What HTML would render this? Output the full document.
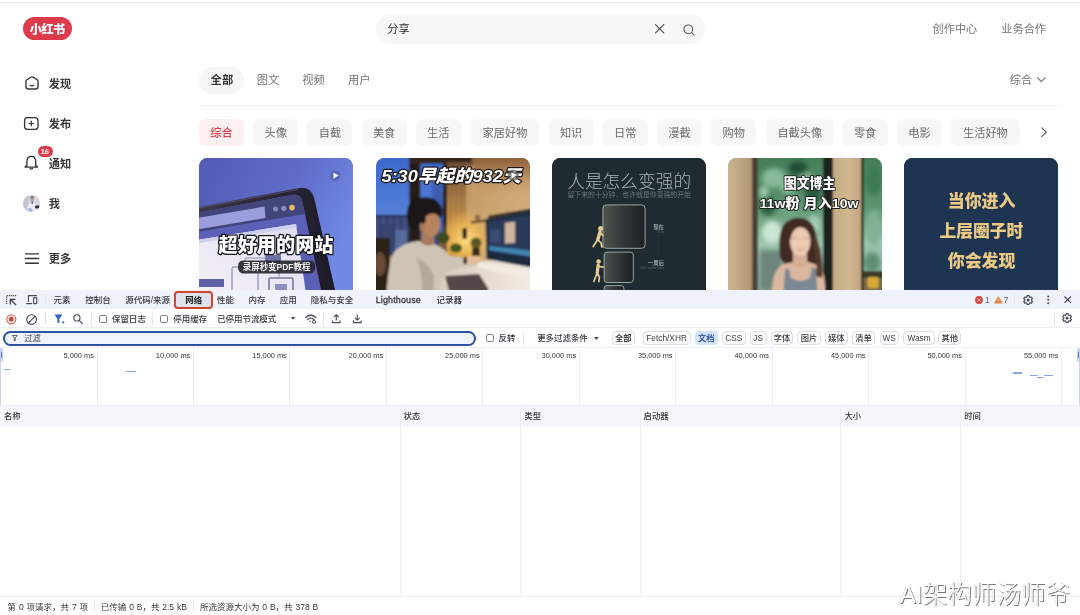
<!DOCTYPE html>
<html lang="zh-CN">
<head>
<meta charset="utf-8">
<title>小红书 - 分享</title>
<style>
*{margin:0;padding:0;box-sizing:border-box}
html,body{width:1080px;height:615px;overflow:hidden;background:#fff}
body{opacity:0.9999;position:relative;font-family:"Liberation Sans","Noto Sans CJK SC",sans-serif;color:#333;-webkit-font-smoothing:antialiased}
.a{position:absolute}
.t{position:absolute;white-space:nowrap;line-height:1}
svg{position:absolute;overflow:visible}
/* ---------- page ---------- */
#topline{left:0;top:2px;width:1080px;height:1px;background:#e6e6e6}
#logo{left:23px;top:17px;width:49px;height:23px;border-radius:12px;background:#df3a4b;color:#fff;font-weight:900;font-size:12.2px;text-align:center;line-height:26px;letter-spacing:-0.5px;padding-right:0.5px}
#search{left:376px;top:14px;width:329px;height:29.5px;border-radius:15px;background:#f7f7f7}
.nav{font-size:11.2px;font-weight:700;color:#363636;left:48.7px}
.top{font-size:11.2px;color:#757575}
.tab{font-size:11.3px;color:#757575;top:75.2px}
#tabsel{left:199px;top:67px;width:45.3px;height:26.5px;border-radius:14px;background:#f6f6f6}
#divider{left:199px;top:105px;width:861px;height:1px;background:#f1f1f1}
.chip{position:absolute;top:118.8px;height:27px;width:45px;border-radius:6px;background:#f7f7f7;color:#6b6b6b;font-size:11.2px;text-align:center;line-height:28.6px;white-space:nowrap}
.chip.w{width:68.4px}
.chip.on{background:#fdf0f1;color:#e0394a;font-weight:500}
.card{position:absolute;top:157.5px;width:154px;height:140px;border-radius:8.5px;overflow:hidden}
.card svg{left:0;top:0}
/* ---------- devtools ---------- */
#dt{left:0;top:289.5px;width:1080px;height:325.5px;background:#fff;font-size:8.3px;color:#3c4043}

#dt .t{color:#33363b}
#dtbar{left:0;top:0;width:1080px;height:20px;background:#eff2fa;border-bottom:1px solid #e1e6f1}
.dtab{font-size:8.5px;top:6.2px;font-weight:500}
.vs{position:absolute;width:1px;background:#e2e6ee}
#redbox{left:174px;top:1px;width:38.8px;height:18.6px;border:2.2px solid #cf4535;border-radius:4px;background:#dde2ec}
#tool{left:0;top:19.8px;width:1080px;height:18.8px;background:#fff;border-bottom:1px solid #eceff5}
.tl{font-size:8.45px;top:25.6px;font-weight:500}
.cb{position:absolute;width:8.4px;height:8.4px;border:1.1px solid #7a8088;border-radius:1.8px;background:#fff}
#pill{left:3.3px;top:41.5px;width:473.2px;height:14.8px;border:2.2px solid #2d52a2;border-radius:7.4px;background:#eef3fc}
.fb{position:absolute;top:41.6px;height:14.2px;border:1px solid #d9dde4;border-radius:4px;font-size:8.3px;text-align:center;line-height:13.2px;color:#3c4043;white-space:nowrap;background:#fff;font-weight:500}
.fb.on{background:#d3e3fd;border-color:#d3e3fd;color:#1b3f8f}
#ov{left:0;top:57.9px;width:1080px;height:58px;background:#fff;border-top:1px solid #eceff5}
.gl{position:absolute;top:58px;width:1px;height:58px;background:#e9edf5}
.ms{font-size:7.4px;top:62.3px;text-align:right;width:60px;color:#3c4043}
.dash{position:absolute;height:1.3px;background:#8fa4e3}
#th{left:0;top:115.7px;width:1080px;height:20.4px;background:#f5f7fc;border-top:1px solid #eaedf5;border-bottom:1px solid #eceff5}
.thc{font-size:8.3px;top:122.3px;font-weight:500}
.cl{position:absolute;top:116px;width:1px;height:191px;background:#eceef4}
#status{left:0;top:306.4px;width:1080px;height:19.1px;background:#fff;border-top:1px solid #e9eff1}
.st{font-size:8.5px;top:313.2px;word-spacing:0.5px}
</style>
</head>
<body>
<div class="a" id="topline"></div>

<!-- header -->
<div class="a" id="logo">小红书</div>
<div class="a" id="search"></div>
<div class="t" style="left:387.3px;top:24px;font-size:11.3px;color:#333">分享</div>
<svg style="left:655px;top:24.3px" width="9.4" height="9.4" viewBox="0 0 10 10"><path d="M0.6 0.6L9.4 9.4M9.4 0.6L0.6 9.4" stroke="#444" stroke-width="1.15" fill="none" stroke-linecap="round"/></svg>
<svg style="left:682.5px;top:23.8px" width="12" height="12" viewBox="0 0 12 12"><circle cx="5.3" cy="5.3" r="4.4" stroke="#555" stroke-width="1.05" fill="none"/><path d="M8.7 8.7L11 11" stroke="#555" stroke-width="1.05" stroke-linecap="round"/></svg>
<div class="t top" style="left:932.5px;top:24.2px">创作中心</div>
<div class="t top" style="left:1001.3px;top:24.2px">业务合作</div>

<!-- sidebar -->
<svg style="left:24.5px;top:75.5px" width="14" height="14" viewBox="0 0 14 14"><path d="M1 5.2Q1 4.3 1.8 3.8L6 1.2Q7 0.6 8 1.2L12.2 3.8Q13 4.3 13 5.2V10.4Q13 13 10.4 13H3.6Q1 13 1 10.4Z" fill="none" stroke="#333" stroke-width="1.35" stroke-linejoin="round"/><path d="M5.2 9.3Q7 10.5 8.8 9.3" fill="none" stroke="#333" stroke-width="1.25" stroke-linecap="round"/></svg>
<div class="t nav" style="top:79.0px">发现</div>
<svg style="left:24.3px;top:116.6px" width="14.6" height="13" viewBox="0 0 14.6 13"><rect x="0.6" y="0.6" width="13.4" height="11.8" rx="3.2" fill="none" stroke="#333" stroke-width="1.35"/><path d="M7.3 4.2V8.8M5 6.5H9.6" stroke="#333" stroke-width="1.25" stroke-linecap="round"/></svg>
<div class="t nav" style="top:118.8px">发布</div>
<svg style="left:24.3px;top:155.4px" width="14.6" height="15" viewBox="0 0 14.6 15"><path d="M2.9 10.6V6.6Q2.9 1.4 7.3 1.4Q11.7 1.4 11.7 6.6V10.6L13.4 11.6V12.2H1.2V11.6Z" fill="none" stroke="#333" stroke-width="1.35" stroke-linejoin="round"/><path d="M6 13.6Q7.3 14.6 8.6 13.6" fill="none" stroke="#333" stroke-width="1.25" stroke-linecap="round"/></svg>
<div class="a" style="left:37.6px;top:146.3px;width:15px;height:10.4px;border-radius:6px;background:#e0394a"></div>
<div class="t" style="left:40.4px;top:147.6px;font-size:7.8px;color:#fff;font-weight:700">16</div>
<div class="t nav" style="top:159.1px">通知</div>
<div class="a" id="avatar" style="left:22.8px;top:194.6px;width:17.2px;height:17.2px;border-radius:50%;overflow:hidden;background:#cfd4de">
  <svg width="17.2" height="17.2" viewBox="0 0 17.2 17.2"><defs><filter id="bav" x="-10%" y="-10%" width="120%" height="120%"><feGaussianBlur stdDeviation="0.45"/></filter></defs><g filter="url(#bav)"><rect x="-1" y="-1" width="19.2" height="19.2" fill="#d6d6e2"/><rect x="-1" y="-1" width="6.5" height="19.2" fill="#c3c4d3"/><path d="M3.4 18Q4 7.6 9.200 6.400Q14.400 7.600 15 18Z" fill="#ecebf3"/><ellipse cx="9.200" cy="3.700" rx="2" ry="2.500" fill="#b79a8e"/><path d="M7 3.200Q9.200 -0.800 11.400 3Q9.200 1.600 7 3.200Z" fill="#4a3f3e"/><path d="M8.600 6.200H9.800V9H8.600Z" fill="#4a4660"/><rect x="12.200" y="10.600" width="4.200" height="3" rx="0.600" fill="#2b3050"/><ellipse cx="7" cy="15" rx="2.600" ry="2.200" fill="#a9c0de"/></g></svg>
</div>
<div class="t nav" style="top:198.6px">我</div>
<svg style="left:24.6px;top:252.6px" width="14" height="11" viewBox="0 0 14 11"><path d="M0.6 0.8H13.4M0.6 5.5H13.4M0.6 10.2H13.4" stroke="#333" stroke-width="1.35" stroke-linecap="round"/></svg>
<div class="t nav" style="top:253.6px">更多</div>

<!-- tabs -->
<div class="a" id="tabsel"></div>
<div class="t tab" style="left:210.6px;color:#333;font-weight:700">全部</div>
<div class="t tab" style="left:256.7px">图文</div>
<div class="t tab" style="left:302.3px">视频</div>
<div class="t tab" style="left:348px">用户</div>
<div class="t top" style="left:1009.7px;top:75.3px">综合</div>
<svg style="left:1036.6px;top:77.4px" width="8.6" height="5.6" viewBox="0 0 8.6 5.6"><path d="M0.6 0.8L4.3 4.6L8 0.8" fill="none" stroke="#757575" stroke-width="1.15" stroke-linecap="round" stroke-linejoin="round"/></svg>
<div class="a" id="divider"></div>

<!-- chips -->
<div class="chip on" style="left:199px">综合</div>
<div class="chip" style="left:253.2px">头像</div>
<div class="chip" style="left:307.4px">自截</div>
<div class="chip" style="left:361.6px">美食</div>
<div class="chip" style="left:415.8px">生活</div>
<div class="chip w" style="left:470.8px">家居好物</div>
<div class="chip" style="left:548.6px">知识</div>
<div class="chip" style="left:602.8px">日常</div>
<div class="chip" style="left:657px">漫截</div>
<div class="chip" style="left:711.2px">购物</div>
<div class="chip w" style="left:765.6px">自截头像</div>
<div class="chip" style="left:842.6px">零食</div>
<div class="chip" style="left:897px">电影</div>
<div class="chip w" style="left:951.2px">生活好物</div>
<svg style="left:1041.4px;top:127px" width="6.4" height="10.4" viewBox="0 0 6.4 10.4"><path d="M0.8 0.8L5.4 5.2L0.8 9.6" fill="none" stroke="#555" stroke-width="1.1" stroke-linecap="round" stroke-linejoin="round"/></svg>

<!-- cards -->
<div class="card" id="c1" style="left:199px;background:#6a70c8">
<svg width="154" height="140" viewBox="0 0 154 140">
<defs>
<linearGradient id="g1" x1="0" y1="0" x2="1" y2="0.5"><stop offset="0" stop-color="#525bb2"/><stop offset="0.55" stop-color="#5f6cc8"/><stop offset="1" stop-color="#718ae6"/></linearGradient>
<linearGradient id="g1b" x1="0" y1="1" x2="1" y2="0"><stop offset="0" stop-color="#f6f1f6"/><stop offset="1" stop-color="#dddcf1"/></linearGradient>
<linearGradient id="g1f" x1="0" y1="0" x2="1" y2="0"><stop offset="0" stop-color="#3a3848"/><stop offset="1" stop-color="#1d1b29"/></linearGradient>
<filter id="b1" x="-10%" y="-10%" width="120%" height="120%"><feGaussianBlur stdDeviation="0.6"/></filter>
</defs>
<rect width="154" height="140" fill="url(#g1)"/>
<g filter="url(#b1)">
<path d="M-2 49.400L99 30.200Q111.500 28 115 39.500L137 136L-2 136Z" fill="url(#g1f)"/>
<path d="M-2 50.400L99 31.400" stroke="#6a6888" stroke-width="1" stroke-opacity="0.600" fill="none"/>
<path d="M-2 55L94 36.800Q101 35.600 103.200 43L123 136L-2 136Z" fill="#5a60b6"/>
<path d="M-2 55L94 36.800Q101 35.600 103.200 43L106 56L-2 74Z" fill="#42457a"/>
<path d="M-2 60L65.500 48.600L66.500 60L-2 71.500Z" fill="#9c9ddc"/>
<circle cx="76.600" cy="51" r="2.600" fill="#8886c2"/><circle cx="84.800" cy="50.300" r="2.600" fill="#8e8cc8"/><circle cx="93" cy="49.600" r="2.800" fill="#ecbb62"/>
<path d="M-2 82L97 66L107 136L-2 136Z" fill="url(#g1b)"/>
<path d="M-2 82L97 66L97.600 69.500L-2 85.500Z" fill="#cfcfee"/>
<rect x="33" y="109" width="26" height="26" rx="1.500" fill="none" stroke="#77799f" stroke-width="1"/>
<rect x="66" y="97" width="16" height="8" rx="1" fill="#6e70a8"/>
<rect x="70" y="120" width="24" height="14" rx="1" fill="none" stroke="#77799f" stroke-width="1.600"/>
<rect x="76" y="126" width="12" height="8" fill="#8c8ec4"/>
<rect x="-2" y="121" width="27" height="8" fill="#5e60a6"/>
<path d="M46 109V100H66M80 105V120" fill="none" stroke="#8587b7" stroke-width="0.900"/>
</g>
<circle cx="136.400" cy="17.600" r="5.200" fill="#3d4392" fill-opacity="0.400"/>
<path d="M134.400 14.400L139.600 17.600L134.400 20.800Z" fill="#fff"/>
<text x="77" y="94" text-anchor="middle" font-family="'Liberation Sans','Noto Sans CJK SC',sans-serif" font-weight="900" font-size="19.400" fill="#fff" stroke="#14131c" stroke-width="2.600" stroke-linejoin="round" paint-order="stroke" textLength="115" lengthAdjust="spacingAndGlyphs">超好用的网站</text>
<rect x="39.200" y="102.400" width="76.800" height="13" rx="4.800" fill="#23232b" fill-opacity="0.900"/>
<text x="77.600" y="112.100" text-anchor="middle" font-family="'Liberation Sans','Noto Sans CJK SC',sans-serif" font-weight="700" font-size="8.800" fill="#f4f4f4" textLength="67.500" lengthAdjust="spacingAndGlyphs">录屏秒变PDF教程</text>
</svg></div>
<div class="card" id="c2" style="left:375.5px;background:#8a6a40">
<svg width="154" height="140" viewBox="0 0 154 140">
<defs>
<linearGradient id="g2s" x1="0" y1="0" x2="0" y2="1"><stop offset="0" stop-color="#3a66cc"/><stop offset="0.600" stop-color="#5580d8"/><stop offset="1" stop-color="#6f8fd4"/></linearGradient>
<linearGradient id="g2w" x1="0" y1="0" x2="1" y2="0.6"><stop offset="0" stop-color="#ac7e4a"/><stop offset="0.6" stop-color="#c69e68"/><stop offset="1" stop-color="#d6b486"/></linearGradient>
<linearGradient id="g2c" x1="0" y1="0" x2="0" y2="1"><stop offset="0" stop-color="#6a4c30"/><stop offset="0.350" stop-color="#a87a46"/><stop offset="0.750" stop-color="#e2aa52"/><stop offset="1" stop-color="#b98038"/></linearGradient>
<radialGradient id="g2l" cx="0.5" cy="0.5" r="0.5"><stop offset="0" stop-color="#ffe28a" stop-opacity="0.950"/><stop offset="0.500" stop-color="#f6bf55" stop-opacity="0.700"/><stop offset="1" stop-color="#f0b050" stop-opacity="0"/></radialGradient>
<linearGradient id="g2t" x1="0" y1="0" x2="0" y2="1"><stop offset="0" stop-color="#8a5e38"/><stop offset="0.45" stop-color="#a97a4e" stop-opacity="0.9"/><stop offset="1" stop-color="#c89a68" stop-opacity="0"/></linearGradient><linearGradient id="g2d" x1="0" y1="0" x2="1" y2="0"><stop offset="0" stop-color="#d8c8b8"/><stop offset="1" stop-color="#f2ebe4"/></linearGradient>
<filter id="b2" x="-10%" y="-10%" width="120%" height="120%"><feGaussianBlur stdDeviation="0.900"/></filter>
</defs>
<g filter="url(#b2)">
<rect x="-4" y="-4" width="162" height="148" fill="url(#g2w)"/>
<!-- windows -->
<rect x="-4" y="-4" width="76" height="100" fill="url(#g2s)"/>
<rect x="-4" y="58" width="76" height="40" fill="#3f4f80"/>
<rect x="-4" y="57" width="40" height="1.600" fill="#1f2238"/>
<path d="M4 58V92M11 58V92M18 58V92M25 58V92M32 58V92" stroke="#27304f" stroke-width="1.200"/>
<rect x="5" y="66" width="12" height="30" fill="#37456f"/><rect x="19" y="72" width="12" height="24" fill="#566a9c"/>
<rect x="56" y="14" width="11" height="60" fill="#3c5fae"/>
<rect x="46" y="40" width="9" height="40" fill="#35508f"/>
<rect x="33.300" y="-4" width="11" height="110" fill="#261d18"/>
<rect x="67" y="-4" width="5" height="110" fill="#2b211a"/>
<!-- top band -->
<rect x="33" y="-4" width="125" height="9.500" fill="#35271b"/>
<rect x="96" y="-4" width="62" height="40" fill="url(#g2t)"/>
<!-- curtain -->
<rect x="71" y="4" width="26" height="104" fill="url(#g2c)"/>
<path d="M75 6V100M80 6V100M85 6V100M90 6V100" stroke="#8a6238" stroke-width="1.200" stroke-opacity="0.550"/>
<rect x="90" y="8" width="8" height="70" fill="#cfa974" fill-opacity="0.700"/>
<!-- lamp glow -->
<ellipse cx="90" cy="82" rx="27" ry="30" fill="url(#g2l)"/>
<rect x="86.500" y="70" width="4.500" height="11" rx="1" fill="#33261a"/>
<!-- shelf -->
<path d="M95 63.500L114 61V63L95 65.500Z" fill="#3b2a1c"/>
<rect x="99" y="57" width="5" height="5" fill="#8a6a48"/>
<!-- plants -->
<ellipse cx="67" cy="80" rx="6.500" ry="6" fill="#3d4a1f"/>
<rect x="63" y="85" width="8" height="10" fill="#7a5a3c"/>
<ellipse cx="80" cy="90" rx="6" ry="4.500" fill="#46541f"/>
<ellipse cx="100" cy="85" rx="5.500" ry="5.500" fill="#5a5a24"/>
<rect x="96" y="90" width="8" height="8" fill="#3a2a1c"/>
<!-- desk -->
<path d="M54 106L158 100V144H50Z" fill="url(#g2d)"/>
<path d="M69 118L103 116L112 130L114 144H76Z" fill="#54464a"/>
<!-- monitor -->
<path d="M112.400 57.700L158 50V52.500L112.400 60.200Z" fill="#1d1a1c"/>
<path d="M109.500 61L158 52.500V110L110.500 101Z" fill="#1f2a3e"/>
<path d="M112 64L158 56V100L113 93Z" fill="#2b3a5a"/>
<rect x="129" y="64.500" width="10" height="21" fill="#cdb49c" transform="skewY(-6) translate(0 13.800)"/>
<path d="M113 88L158 93V99L113.500 92Z" fill="#3f86b2"/>
<path d="M114 72L124 70.500V84L114 85Z" fill="#3a4c70"/>
<path d="M101 104L158 113V121L101 109.500Z" fill="#f3ece5"/>
<!-- lower-left dark -->
<rect x="-4" y="80" width="18" height="64" fill="#2c2019"/>
<ellipse cx="4" cy="106" rx="6" ry="12" fill="#6a4a34"/>
<!-- person -->
<path d="M10 144Q12 100 20 92Q30 84 42 83L58 86Q68 90 74 98L92 100L100 99L104 104L98 108L72 113Q64 118 60 144Z" fill="#cdc4b6"/>
<path d="M40 100Q52 104 58 118L56 144H46Q48 116 40 100Z" fill="#aa9c8c" fill-opacity="0.700"/>
<path d="M46 70H58V86Q52 90 45 85Z" fill="#a87a5c"/>
<ellipse cx="97.500" cy="102.500" rx="7.500" ry="4.500" fill="#e2bc9c"/>
<rect x="87.500" y="99" width="3.500" height="7" fill="#2a2220"/>
<ellipse cx="55.500" cy="66" rx="9" ry="12.500" fill="#b8845e"/>
<ellipse cx="46.500" cy="69" rx="2.800" ry="4.500" fill="#a97a5c"/>
<path d="M31 60Q29 42 46 39.500Q62 38 66.500 52Q67 57 64.500 60Q58 52 50 58Q50 66 47 66Q44 62 42 70L36 72Q32 68 31 60Z" fill="#1b1513"/>
</g>
<text x="75.200" y="23.600" text-anchor="middle" font-family="'Liberation Sans','Noto Sans CJK SC',sans-serif" font-weight="900" font-style="italic" font-size="17.400" fill="#fff" stroke="#1c1a18" stroke-width="2.400" stroke-linejoin="round" paint-order="stroke" textLength="139.500" lengthAdjust="spacingAndGlyphs">5:30早起的932天</text>
<circle cx="137.300" cy="17.200" r="5.600" fill="#5e5e5e" fill-opacity="0.700"/>
<path d="M135.500 14.200L140.500 17.200L135.500 20.200Z" fill="#fff"/>
</svg></div>
<div class="card" id="c3" style="left:551.8px;background:#1f2a31">
<svg width="154" height="140" viewBox="0 0 154 140">
<defs>
<linearGradient id="g3" x1="0" y1="0" x2="1" y2="0"><stop offset="0" stop-color="#50554d"/><stop offset="0.450" stop-color="#33393a"/><stop offset="1" stop-color="#1a2024"/></linearGradient>
</defs>
<rect width="154" height="140" fill="#1f2a31"/>
<text x="77.200" y="30.300" text-anchor="middle" font-family="'Liberation Sans','Noto Sans CJK SC',sans-serif" font-weight="300" font-size="17.700" fill="#adb3b6" textLength="124" lengthAdjust="spacingAndGlyphs">人是怎么变强的</text>
<text x="77.200" y="39" text-anchor="middle" font-family="'Liberation Sans','Noto Sans CJK SC',sans-serif" font-weight="400" font-size="6.800" fill="#6f787e" textLength="123.500" lengthAdjust="spacingAndGlyphs">留下来的十分钟，也许就是你变强的开始</text>
<rect x="50.900" y="46.900" width="42.200" height="43.400" rx="3.400" fill="url(#g3)" stroke="#aab2ac" stroke-width="0.900"/>
<g fill="#e3cd97" stroke="#e3cd97" stroke-linecap="round" stroke-linejoin="round">
<circle cx="48.600" cy="70.600" r="2.500" stroke="none"/>
<path d="M48 74L45.800 81.500" stroke-width="3.400" fill="none"/>
<path d="M48 75L51 77.500M45.800 81.500L41.200 88.600M45.800 81.500L49 85L50 89" stroke-width="1.800" fill="none"/>
<circle cx="46.600" cy="103.500" r="2.300" stroke="none"/>
<path d="M46.200 107L45.200 115" stroke-width="3.200" fill="none"/>
<path d="M46.500 108.500L51.500 109.200M45.200 115L41.800 123.400M45.200 115L47.400 119L46.800 123.600" stroke-width="1.700" fill="none"/>
</g>
<text x="112" y="70.800" text-anchor="end" font-family="'Liberation Sans','Noto Sans CJK SC',sans-serif" font-weight="500" font-size="5.400" fill="#b4bbbb">现在</text>
<text x="112" y="75.200" text-anchor="end" font-family="'Liberation Sans',sans-serif" font-size="3.600" fill="#5d676b">Now</text>
<path d="M106.200 77V99" stroke="#2e393f" stroke-width="0.600"/>
<rect x="52.100" y="94.100" width="29.200" height="30.400" rx="3" fill="url(#g3)" stroke="#aab2ac" stroke-width="0.900"/>
<text x="112" y="106.900" text-anchor="end" font-family="'Liberation Sans','Noto Sans CJK SC',sans-serif" font-weight="500" font-size="5.400" fill="#b4bbbb">一周后</text>
<text x="112" y="110.800" text-anchor="end" font-family="'Liberation Sans',sans-serif" font-size="3.600" fill="#5d676b">One week later</text>
<rect x="52.100" y="127.600" width="19.800" height="20" rx="2.600" fill="url(#g3)" stroke="#aab2ac" stroke-width="0.900"/>
</svg></div>
<div class="card" id="c4" style="left:728px;background:#6a8a70">
<svg width="154" height="140" viewBox="0 0 154 140">
<defs>
<linearGradient id="g4w" x1="0" y1="0" x2="1" y2="0"><stop offset="0" stop-color="#cdb896"/><stop offset="0.600" stop-color="#c0a682"/><stop offset="1" stop-color="#ad926e"/></linearGradient>
<linearGradient id="g4f" x1="0" y1="0" x2="0" y2="1"><stop offset="0" stop-color="#447c58"/><stop offset="0.360" stop-color="#5c9570"/><stop offset="0.600" stop-color="#9cc6ae"/><stop offset="1" stop-color="#86a398"/></linearGradient>
<linearGradient id="g4c" x1="0" y1="0" x2="1" y2="0"><stop offset="0" stop-color="#c5a984"/><stop offset="0.500" stop-color="#d1b793"/><stop offset="1" stop-color="#c2a680"/></linearGradient>
<filter id="b4" x="-10%" y="-10%" width="120%" height="120%"><feGaussianBlur stdDeviation="0.900"/></filter>
<filter id="b4b" x="-30%" y="-30%" width="160%" height="160%"><feGaussianBlur stdDeviation="2.200"/></filter>
</defs>
<g filter="url(#b4)">
<rect x="-4" y="-4" width="162" height="148" fill="url(#g4f)"/>
<g filter="url(#b4b)">
<ellipse cx="46" cy="20" rx="12" ry="10" fill="#86ba98"/>
<ellipse cx="60" cy="30" rx="7" ry="5" fill="#97c7a6"/>
<ellipse cx="78" cy="18" rx="6" ry="5" fill="#7db08e"/>
<ellipse cx="36" cy="34" rx="4" ry="6" fill="#a3cfb3"/>
<ellipse cx="70" cy="10" rx="10" ry="7" fill="#244f38"/>
<ellipse cx="85" cy="34" rx="8" ry="14" fill="#2b5a40"/>
<ellipse cx="40" cy="48" rx="8" ry="10" fill="#2f6044"/>
<ellipse cx="44" cy="74" rx="10" ry="11" fill="#cde5d6"/>
<ellipse cx="86" cy="66" rx="6" ry="9" fill="#a5cdb6"/>
<ellipse cx="62" cy="52" rx="9" ry="6" fill="#6fa584"/>
<rect x="32" y="92" width="22" height="40" fill="#6d857d"/>
<ellipse cx="146" cy="22" rx="8" ry="16" fill="#3d7a55"/>
<ellipse cx="146" cy="70" rx="7" ry="18" fill="#82b197"/>
<ellipse cx="144" cy="104" rx="8" ry="10" fill="#5f8d74"/>
</g>
<rect x="-4" y="-4" width="28" height="148" fill="url(#g4w)"/>
<rect x="24.200" y="-4" width="5.600" height="148" fill="#4a3e30"/>
<rect x="95" y="-4" width="10.200" height="148" fill="#1f201a"/>
<rect x="105" y="-4" width="28.400" height="148" fill="url(#g4c)"/>
<rect x="133" y="-4" width="2.800" height="148" fill="#2a2a20"/>
<rect x="135.800" y="113" width="22" height="7" fill="#3a3a2c"/>
<rect x="135.800" y="120" width="22" height="24" fill="#7b6a48"/>
<rect x="139.600" y="119" width="11" height="11" rx="2" fill="#d9a936"/>
<!-- person -->
<path d="M52 100Q49 72 58 64Q70 56 81 63Q90 70 89 92Q92 108 96 118L88 122L58 108Z" fill="#402b22"/>
<path d="M44 144Q42 112 56 106L66 104H80L92 108Q98 114 97 144Z" fill="#dcb79f"/>
<path d="M65 92H79V108Q72 112 65 108Z" fill="#d6ae96"/>
<path d="M55 144L57 112L61 110L63 120Q72 126 82 120L84 109L88 111L90 144Z" fill="#7c8894"/>
<ellipse cx="72.200" cy="83.500" rx="10.200" ry="14.500" fill="#ecc9b2"/>
<path d="M58 82Q57 64 72 63Q86 64 86 82Q82 70 72 69Q62 70 61 92Q58 90 58 82Z" fill="#402b22"/>
<path d="M84 80Q90 96 88 118L94 120Q96 100 89 80Z" fill="#553a2e"/>
<path d="M63.500 80.500H70.500M74.500 80.500H81.500" stroke="#b9917c" stroke-width="0.800"/>
<path d="M68.500 90.500Q72.500 93.500 76.500 90.500" fill="none" stroke="#c98c7c" stroke-width="1"/>
</g>
<g font-family="'Liberation Sans','Noto Sans CJK SC',sans-serif" font-weight="900" fill="#fff" stroke="#22241f" stroke-width="1.900" stroke-linejoin="round" paint-order="stroke" text-anchor="middle">
<text x="81.600" y="30" font-size="13.400" textLength="51.500" lengthAdjust="spacingAndGlyphs">图文博主</text>
<text x="81" y="50.200" font-size="13.200" textLength="99" lengthAdjust="spacingAndGlyphs">11w粉 月入10w</text>
</g>
</svg></div>
<div class="card" id="c5" style="left:904.3px;background:#1e3552">
<svg width="154" height="140" viewBox="0 0 154 140">
<rect width="154" height="140" fill="#1e3552"/>
<g font-family="'Liberation Sans','Noto Sans CJK SC',sans-serif" font-weight="900" font-size="17" fill="#ecc985" text-anchor="middle">
<text x="77.600" y="48.800" textLength="67.800" lengthAdjust="spacingAndGlyphs">当你进入</text>
<text x="77.400" y="78.800" textLength="83.800" lengthAdjust="spacingAndGlyphs">上层圈子时</text>
<text x="77.600" y="108.800" textLength="67.800" lengthAdjust="spacingAndGlyphs">你会发现</text>
</g>
</svg></div>

<!-- devtools -->
<div class="a" id="dt">
  <div class="a" id="dtbar"></div>
  <!-- inspect / device icons -->
  <svg style="left:6.4px;top:5.2px" width="10.6" height="10" viewBox="0 0 10.6 10"><path d="M0.6 9V0.6H10.2" fill="none" stroke="#474b52" stroke-width="1.1" stroke-dasharray="1.3 0.8"/><path d="M8.8 4.3H4.3V8.800M4.500 4.500L9.600 9.600" fill="none" stroke="#3c4046" stroke-width="1.300" stroke-linecap="square"/></svg>
  <svg style="left:26.2px;top:5.4px" width="11.6" height="9.4" viewBox="0 0 11.6 9.4"><path d="M2.4 7V0.6H11" fill="none" stroke="#474b52" stroke-width="1.1"/><path d="M0.2 8.6H6.2" stroke="#474b52" stroke-width="1.2"/><rect x="7.6" y="2.6" width="3.2" height="6" rx="0.6" fill="none" stroke="#474b52" stroke-width="1.1"/></svg>
  <div class="vs" style="left:44.6px;top:4px;height:12px"></div>
  <div class="t dtab" style="left:53.6px">元素</div>
  <div class="t dtab" style="left:85.2px">控制台</div>
  <div class="t dtab" style="left:125.2px">源代码/来源</div>
  <div class="a" id="redbox"></div>
  <div class="t dtab" style="left:185.2px;font-weight:700;color:#202124">网络</div>
  <div class="t dtab" style="left:217px">性能</div>
  <div class="t dtab" style="left:248.4px">内存</div>
  <div class="t dtab" style="left:279.8px">应用</div>
  <div class="t dtab" style="left:310.8px">隐私与安全</div>
  <div class="t dtab" style="left:375.7px;font-size:8.9px;top:6.2px;letter-spacing:0.18px;-webkit-text-stroke:0.28px #33363b">Lighthouse</div>
  <div class="t dtab" style="left:436.4px">记录器</div>
  <!-- right side of tab bar -->
  <svg style="left:975px;top:6.4px" width="8" height="8" viewBox="0 0 8 8"><circle cx="4" cy="4" r="3.9" fill="#d9443a"/><path d="M2.6 2.6L5.4 5.4M5.4 2.6L2.6 5.4" stroke="#f6d5d2" stroke-width="0.9" stroke-linecap="round"/></svg>
  <div class="t" style="left:984.8px;top:6px;font-size:9px;color:#5f6b80">1</div>
  <svg style="left:993.6px;top:6.6px" width="8.6" height="7.6" viewBox="0 0 8.6 7.6"><path d="M4.3 0.4L8.3 7.2H0.3Z" fill="#e8833a" stroke="#e8833a" stroke-width="0.5" stroke-linejoin="round"/><path d="M4.3 2.8V4.8" stroke="#fbe3cf" stroke-width="0.8"/></svg>
  <div class="t" style="left:1003.6px;top:6px;font-size:9px;color:#5f6b80">7</div>
  <div class="vs" style="left:1014.4px;top:4px;height:12px"></div>
  <svg class="gear" style="left:1021.9px;top:4.4px" width="12.2" height="12.2" viewBox="0 0 24 24"><path d="M19.4 13a7.5 7.5 0 0 0 0-2l2.1-1.6-2-3.5-2.5 1a7.5 7.5 0 0 0-1.700-1L14.900 3.300h-4l-.4 2.600a7.500 7.500 0 0 0-1.700 1l-2.500-1-2 3.500L6.400 11a7.500 7.500 0 0 0 0 2l-2.100 1.600 2 3.500 2.500-1a7.500 7.500 0 0 0 1.700 1l.4 2.600h4l.4-2.600a7.500 7.500 0 0 0 1.700-1l2.500 1 2-3.500z" fill="none" stroke="#474b52" stroke-width="2.3" stroke-linejoin="round" transform="translate(-0.9 0)"/><circle cx="12" cy="12" r="3" fill="#474b52"/></svg>
  <svg style="left:1046.6px;top:5.6px" width="2.4" height="9.6" viewBox="0 0 2.4 9.6"><circle cx="1.2" cy="1.400" r="1" fill="#474b52"/><circle cx="1.2" cy="4.800" r="1" fill="#474b52"/><circle cx="1.2" cy="8.200" r="1" fill="#474b52"/></svg>
  <svg style="left:1063.8px;top:6.6px" width="7.4" height="7.4" viewBox="0 0 7.4 7.4"><path d="M0.5 0.5L6.9 6.9M6.9 0.5L0.5 6.900" stroke="#474b52" stroke-width="1.1" fill="none"/></svg>

  <!-- toolbar -->
  <div class="a" id="tool"></div>
  <svg style="left:6.2px;top:24.2px" width="10.6" height="10.6" viewBox="0 0 10.6 10.6"><circle cx="5.3" cy="5.3" r="4.5" fill="none" stroke="#e0655b" stroke-width="1.25"/><rect x="3.1" y="3.100" width="4.4" height="4.4" rx="1" fill="#cf4036"/></svg>
  <svg style="left:25.800px;top:24.100px" width="11.2" height="11.200" viewBox="0 0 11.2 11.2"><circle cx="5.600" cy="5.600" r="4.800" fill="none" stroke="#474b52" stroke-width="1.100"/><path d="M2.3 9L9 2.3" stroke="#474b52" stroke-width="1.100"/></svg>
  <div class="vs" style="left:44.600px;top:23px;height:12.500px"></div>
  <svg style="left:53.600px;top:24.600px" width="11" height="10" viewBox="0 0 11 10"><path d="M0.4 0.600H8.400L5.400 4.700V8.800H3.400V4.700Z" fill="#2f62c8"/><circle cx="9.200" cy="8.400" r="1.100" fill="#2f62c8"/></svg>
  <svg style="left:73.200px;top:24.200px" width="10" height="10.400" viewBox="0 0 10 10.400"><circle cx="3.900" cy="3.900" r="3.100" fill="none" stroke="#474b52" stroke-width="1.100"/><path d="M6.200 6.300L9.400 9.700" stroke="#474b52" stroke-width="1.200" stroke-linecap="round"/></svg>
  <div class="vs" style="left:90.800px;top:23px;height:12.500px"></div>
  <div class="cb" style="left:98.600px;top:25.400px"></div>
  <div class="t tl" style="left:112px">保留日志</div>
  <div class="vs" style="left:152.400px;top:23px;height:12.500px"></div>
  <div class="cb" style="left:160px;top:25.400px"></div>
  <div class="t tl" style="left:173.300px">停用缓存</div>
  <div class="t tl" style="left:217.200px">已停用节流模式</div>
  <svg style="left:291.200px;top:27.900px" width="4.400" height="2.800" viewBox="0 0 4.400 2.800"><path d="M0 0H4.400L2.200 2.800Z" fill="#474b52"/></svg>
  <svg style="left:305px;top:24.600px" width="12" height="10" viewBox="0 0 12 10"><path d="M0.700 3.400Q5.800 -1 10.900 3.400M2.600 5.500Q5.800 2.800 9 5.500" fill="none" stroke="#474b52" stroke-width="1.300" stroke-linecap="round"/><path d="M4.600 7.400H5.800" stroke="#474b52" stroke-width="1.300"/><circle cx="9" cy="7.900" r="1.500" fill="none" stroke="#474b52" stroke-width="1"/></svg>
  <div class="vs" style="left:323.300px;top:23px;height:12.500px"></div>
  <svg style="left:332.400px;top:24.600px" width="8.600" height="9.200" viewBox="0 0 8.600 9.200"><path d="M4.300 6.400V0.800M1.900 3L4.300 0.700L6.700 3M0.500 6.600V8.600H8.100V6.600" fill="none" stroke="#474b52" stroke-width="1.100"/></svg>
  <svg style="left:352.800px;top:24.600px" width="8.600" height="9.200" viewBox="0 0 8.600 9.200"><path d="M4.300 0.400V6M1.900 3.800L4.300 6.100L6.700 3.800M0.500 6.600V8.600H8.100V6.600" fill="none" stroke="#474b52" stroke-width="1.100"/></svg>
  <div class="vs" style="left:1054.400px;top:23px;height:12.500px"></div>
  <svg class="gear" style="left:1061px;top:22.900px" width="12.200" height="12.200" viewBox="0 0 24 24"><path d="M19.4 13a7.500 7.500 0 0 0 0-2l2.100-1.600-2-3.500-2.500 1a7.500 7.500 0 0 0-1.700-1L14.900 3.300h-4l-.4 2.600a7.500 7.500 0 0 0-1.700 1l-2.500-1-2 3.500L6.400 11a7.500 7.500 0 0 0 0 2l-2.100 1.600 2 3.500 2.500-1a7.500 7.500 0 0 0 1.700 1l.4 2.600h4l.4-2.600a7.500 7.500 0 0 0 1.700-1l2.500 1 2-3.500z" fill="none" stroke="#474b52" stroke-width="2.300" stroke-linejoin="round" transform="translate(-0.900 0)"/><circle cx="12" cy="12" r="3" fill="#474b52"/></svg>

  <!-- filter row -->
  <div class="a" id="pill"></div>
  <svg style="left:12.400px;top:45.600px" width="5.600" height="6" viewBox="0 0 5.600 6"><path d="M0.400 0.500H5.200L3.300 2.900V5.500H2.300V2.900Z" fill="none" stroke="#3c4043" stroke-width="0.800" stroke-linejoin="round"/></svg>
  <div class="t" style="left:24.200px;top:44.900px;font-size:8.300px;color:#3c4043">过滤</div>
  <div class="cb" style="left:485.600px;top:44.600px"></div>
  <div class="t tl" style="left:498.500px;top:44.600px">反转</div>
  <div class="vs" style="left:523.400px;top:42.500px;height:12.500px"></div>
  <div class="t tl" style="left:537.200px;top:44.600px">更多过滤条件</div>
  <svg style="left:593.800px;top:47.200px" width="4.800" height="3" viewBox="0 0 4.800 3"><path d="M0 0H4.800L2.400 3Z" fill="#474b52"/></svg>
  <div class="fb" style="left:612px;width:22.600px;font-weight:700">全部</div>
  <div class="fb" style="left:642.600px;width:48px">Fetch/XHR</div>
  <div class="fb on" style="left:694.600px;width:23.400px">文档</div>
  <div class="fb" style="left:721.700px;width:24px">CSS</div>
  <div class="fb" style="left:749.800px;width:16.800px">JS</div>
  <div class="fb" style="left:770.600px;width:22.800px">字体</div>
  <div class="fb" style="left:797.400px;width:23.200px">图片</div>
  <div class="fb" style="left:824.600px;width:23.400px">媒体</div>
  <div class="fb" style="left:851.900px;width:23.400px">清单</div>
  <div class="fb" style="left:879.800px;width:18.800px">WS</div>
  <div class="fb" style="left:903.200px;width:31.600px">Wasm</div>
  <div class="fb" style="left:938.200px;width:23.200px">其他</div>

  <!-- overview -->
  <div class="a" id="ov"></div>
  <div class="gl" style="left:96.5px"></div><div class="t ms" style="left:33.9px">5,000 ms</div>
  <div class="gl" style="left:192.9px"></div><div class="t ms" style="left:130.3px">10,000 ms</div>
  <div class="gl" style="left:289.4px"></div><div class="t ms" style="left:226.8px">15,000 ms</div>
  <div class="gl" style="left:385.8px"></div><div class="t ms" style="left:323.2px">20,000 ms</div>
  <div class="gl" style="left:482.2px"></div><div class="t ms" style="left:419.6px">25,000 ms</div>
  <div class="gl" style="left:578.7px"></div><div class="t ms" style="left:516.1px">30,000 ms</div>
  <div class="gl" style="left:675.1px"></div><div class="t ms" style="left:612.5px">35,000 ms</div>
  <div class="gl" style="left:771.6px"></div><div class="t ms" style="left:709.0px">40,000 ms</div>
  <div class="gl" style="left:868.1px"></div><div class="t ms" style="left:805.5px">45,000 ms</div>
  <div class="gl" style="left:964.5px"></div><div class="t ms" style="left:901.9px">50,000 ms</div>
  <div class="gl" style="left:1061.0px"></div><div class="t ms" style="left:998.4px">55,000 ms</div>
  
  <div class="a" style="left:0;top:58.500px;width:3px;height:13.500px;background:#c6d2f2;border-radius:0 2px 2px 0"></div>
  <div class="a" style="left:0.800px;top:62px;width:1px;height:6px;background:#5b7bd0"></div>
  <div class="a" style="left:0;top:72px;width:1px;height:44px;background:#c9d5f3"></div>
  <div class="a" style="left:1077px;top:58.500px;width:3px;height:13.500px;background:#c6d2f2;border-radius:2px 0 0 2px"></div>
  <div class="a" style="left:1078.200px;top:62px;width:1px;height:6px;background:#5b7bd0"></div>
  <div class="a" style="left:1079px;top:72px;width:1px;height:44px;background:#c9d5f3"></div>
  <div class="dash" style="left:3.700px;top:79px;width:6.400px"></div>
  <div class="dash" style="left:125.600px;top:81.300px;width:10px"></div>
  <div class="dash" style="left:1013px;top:82.800px;width:8.500px"></div>
  <div class="dash" style="left:1030px;top:85.300px;width:7.500px"></div>
  <div class="dash" style="left:1037px;top:87.400px;width:6.500px"></div>
  <div class="dash" style="left:1044px;top:85.300px;width:8.500px"></div>

  <!-- table header -->
  <div class="a" id="th"></div>
  <div class="cl" style="left:399.500px"></div>
  <div class="cl" style="left:520.200px"></div>
  <div class="cl" style="left:640px"></div>
  <div class="cl" style="left:840.300px"></div>
  <div class="cl" style="left:960px"></div>
  <div class="t thc" style="left:4px">名称</div>
  <div class="t thc" style="left:403.600px">状态</div>
  <div class="t thc" style="left:524.400px">类型</div>
  <div class="t thc" style="left:643.600px">启动器</div>
  <div class="t thc" style="left:844.400px">大小</div>
  <div class="t thc" style="left:964.200px">时间</div>

  <!-- status bar -->
  <div class="a" id="status"></div>
  <div class="t st" style="left:7.600px">第 0 项请求，共 7 项</div>
  <div class="vs" style="left:94px;top:311px;height:11px"></div>
  <div class="t st" style="left:100.800px">已传输 0 B，共 2.5 kB</div>
  <div class="vs" style="left:193px;top:311px;height:11px"></div>
  <div class="t st" style="left:200px">所选资源大小为 0 B，共 378 B</div>
</div>
<div class="t" id="wm" style="left:899.4px;top:583.2px;font-size:24.600px;font-weight:300;color:#fff;text-shadow:1px 1px 0.6px #7a7a7a,-0.3px -0.3px 0.5px #cfcfcf">AI架构师汤师爷</div>


</body>
</html>
